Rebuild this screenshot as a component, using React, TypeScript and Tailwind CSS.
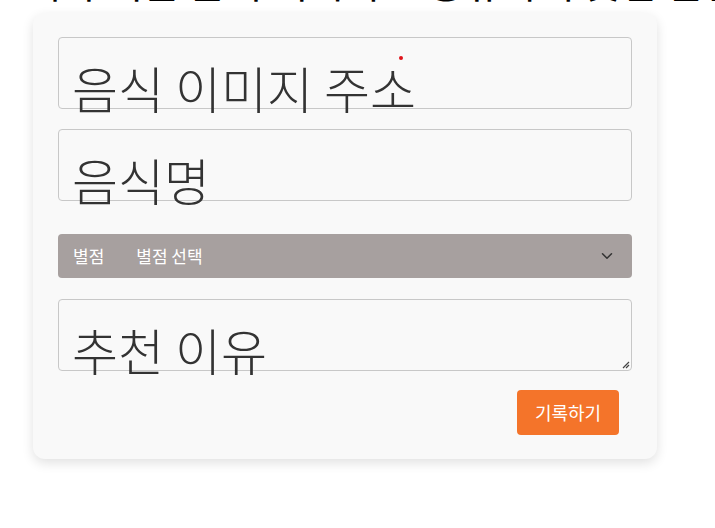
import { ChevronDown } from "lucide-react";

const font = { fontFamily: '"Noto Sans CJK KR", "Noto Sans", sans-serif' };

function BigField({ label, dot, textarea }: { label: string; dot?: boolean; textarea?: boolean }) {
  return (
    <div className="relative h-[72px] rounded-[4px] border border-[#c8c8c8] bg-[#f9f9f9]">
      <span className="absolute left-[13px] top-[16px] whitespace-nowrap text-[50px] font-light leading-[66px] text-[#333333]">
        {label}
      </span>
      {dot && <span className="absolute left-[340px] top-[18px] h-[4px] w-[4px] rounded-full bg-[#e0141b]" />}
      {textarea && (
        <svg className="absolute bottom-[1px] right-[1px]" width="10" height="10" viewBox="0 0 10 10">
          <path d="M9 3 L3 9 M9 6 L6 9" stroke="#444" strokeWidth="1.2" />
        </svg>
      )}
    </div>
  );
}

export default function App() {
  return (
    <div className="relative h-[528px] w-[715px] overflow-hidden bg-white" style={font}>
      {/* heading cut off by the top edge */}
      <div className="absolute left-[24px] top-[-44px] whitespace-nowrap text-[40px] leading-[50px] text-black">
        내가 먹은 음식 기록하고 공유하기 맛집 한번 가보면
      </div>

      <div className="pt-[13px] pl-[33px]">
        <div className="w-[624px] rounded-[12px] bg-[#f9f9f9] px-[25px] pt-[24px] pb-[24px] shadow-[0_4px_12px_rgba(0,0,0,0.12)]">
          <BigField label="음식 이미지 주소" dot />
          <div className="h-[20px]" />
          <BigField label="음식명" />
          <div className="h-[33px]" />
          <div className="flex h-[44px] items-center rounded-[4px] bg-[#a7a09f] pl-[15px] pr-[16px] text-[17px] text-white">
            <span>별점</span>
            <span className="ml-[32px]">별점 선택</span>
            <ChevronDown className="ml-auto h-[18px] w-[18px] text-[#333]" strokeWidth={2} />
          </div>
          <div className="h-[21px]" />
          <BigField label="추천 이유" textarea />
          <div className="mt-[19px] flex justify-end pr-[13px]">
            <button className="h-[45px] w-[102px] rounded-[4px] bg-[#f4742a] text-[18px] text-white">기록하기</button>
          </div>
        </div>
      </div>
    </div>
  );
}
